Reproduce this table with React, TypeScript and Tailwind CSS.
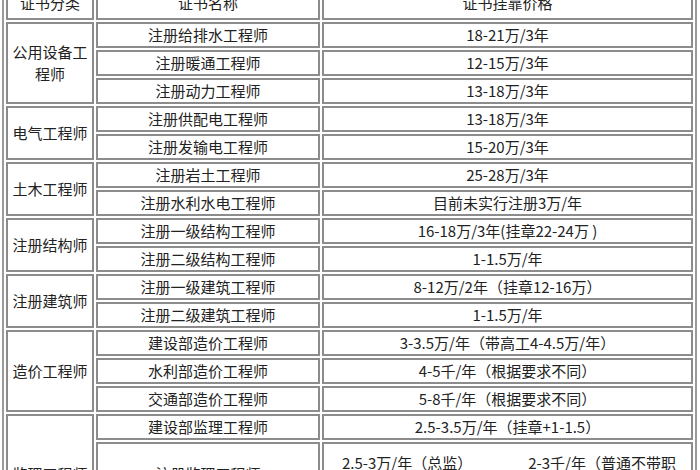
import * as React from "react";

type Group = {
  name: string[];
  rows: [string, string][];
};

const GROUPS: Group[] = [
  {
    name: ["公用设备工", "程师"],
    rows: [
      ["注册给排水工程师", "18-21万/3年"],
      ["注册暖通工程师", "12-15万/3年"],
      ["注册动力工程师", "13-18万/3年"],
    ],
  },
  {
    name: ["电气工程师"],
    rows: [
      ["注册供配电工程师", "13-18万/3年"],
      ["注册发输电工程师", "15-20万/3年"],
    ],
  },
  {
    name: ["土木工程师"],
    rows: [
      ["注册岩土工程师", "25-28万/3年"],
      ["注册水利水电工程师", "目前未实行注册3万/年"],
    ],
  },
  {
    name: ["注册结构师"],
    rows: [
      ["注册一级结构工程师", "16-18万/3年(挂章22-24万 )"],
      ["注册二级结构工程师", "1-1.5万/年"],
    ],
  },
  {
    name: ["注册建筑师"],
    rows: [
      ["注册一级建筑工程师", "8-12万/2年（挂章12-16万）"],
      ["注册二级建筑工程师", "1-1.5万/年"],
    ],
  },
  {
    name: ["造价工程师"],
    rows: [
      ["建设部造价工程师", "3-3.5万/年（带高工4-4.5万/年）"],
      ["水利部造价工程师", "4-5千/年（根据要求不同）"],
      ["交通部造价工程师", "5-8千/年（根据要求不同）"],
    ],
  },
];

const cell = "border-2 border-[#8c8c8c] p-0 h-[26px] text-center align-middle leading-[22px]";
const head = "border-2 border-[#8c8c8c] p-0 pb-[8px] h-[18px] text-center align-middle leading-[14px]";

export default function App() {
  return (
    <div className="w-[700px] h-[470px] overflow-hidden bg-white font-['Noto_Sans_CJK_SC',sans-serif] text-[15px] text-[#222]">
      <table className="-mt-[10px] ml-[2px] w-[695px] table-fixed border-separate border-spacing-[2px] border-2 border-[#9a9a9a]">
        <colgroup>
          <col className="w-[88px]" />
          <col className="w-[224px]" />
          <col />
        </colgroup>
        <tbody>
          <tr>
            <td className={head}>证书分类</td>
            <td className={head}>证书名称</td>
            <td className={head}>证书挂靠价格</td>
          </tr>
          {GROUPS.map((g) =>
            g.rows.map((r, i) => (
              <tr key={r[0]}>
                {i === 0 && (
                  <td rowSpan={g.rows.length} className={`${cell} leading-[20px]`}>
                    {g.name.map((n) => (
                      <div key={n}>{n}</div>
                    ))}
                  </td>
                )}
                <td className={cell}>{r[0]}</td>
                <td className={`${cell} whitespace-nowrap`}>{r[1]}</td>
              </tr>
            ))
          )}
          <tr>
            <td rowSpan={2} className={`${cell} pt-[28px]`}>
              监理工程师
            </td>
            <td className={cell}>建设部监理工程师</td>
            <td className={cell}>2.5-3.5万/年（挂章+1-1.5）</td>
          </tr>
          <tr>
            <td className={`${cell} h-[64px]`}>注册监理工程师</td>
            <td className={`${cell} h-[64px] text-left pl-[18px] leading-[20px]`}>
              <div className="whitespace-nowrap">
                2.5-3万/年（总监）
                <span className="ml-[56px]">2-3千/年（普通不带职</span>
              </div>
              <div className="text-center">称）</div>
            </td>
          </tr>
        </tbody>
      </table>
    </div>
  );
}
